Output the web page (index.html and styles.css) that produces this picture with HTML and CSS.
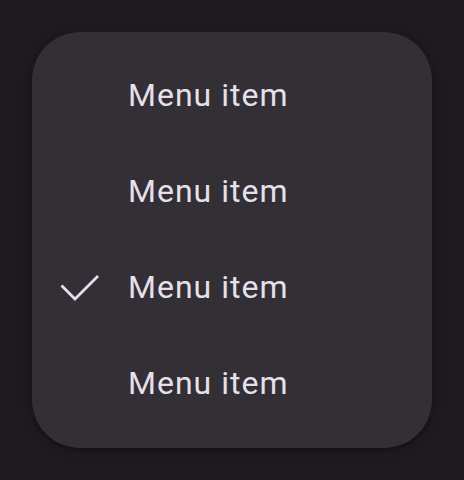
FILE: index.html
```html
<!DOCTYPE html>
<html>
<head>
<meta charset="utf-8">
<link rel="stylesheet" href="styles.css">
</head>
<body>
<div class="menu">
  <div class="item"><span class="lead"></span><span class="label">Menu item</span></div>
  <div class="item"><span class="lead"></span><span class="label">Menu item</span></div>
  <div class="item"><span class="lead"><svg viewBox="0 0 48 48" width="48" height="48"><polyline points="5.5,21.5 19,35 42,12" fill="none" stroke="#e6e0e9" stroke-width="2.8"/></svg></span><span class="label">Menu item</span></div>
  <div class="item"><span class="lead"></span><span class="label">Menu item</span></div>
</div>
</body>
</html>
```

FILE: styles.css
```css
html, body {
  margin: 0;
  padding: 0;
  background: #1d1b20;
  width: 464px;
  height: 480px;
  overflow: hidden;
}
.menu {
  margin: 32px;
  width: 400px;
  box-sizing: border-box;
  padding: 16px 0;
  background: #322f35;
  border-radius: 48px;
  box-shadow: 0 2px 4px rgba(0,0,0,0.3), 0 2px 12px rgba(0,0,0,0.15);
  display: flex;
  flex-direction: column;
}
.item {
  height: 96px;
  display: flex;
  align-items: center;
  padding-left: 24px;
  gap: 24px;
}
.lead {
  width: 48px;
  height: 48px;
  display: flex;
}
.label {
  font-family: Roboto, "Noto Sans", sans-serif;
  font-size: 32px;
  letter-spacing: 1px;
  color: #e6e0e9;
  padding-bottom: 3px;
}
```
